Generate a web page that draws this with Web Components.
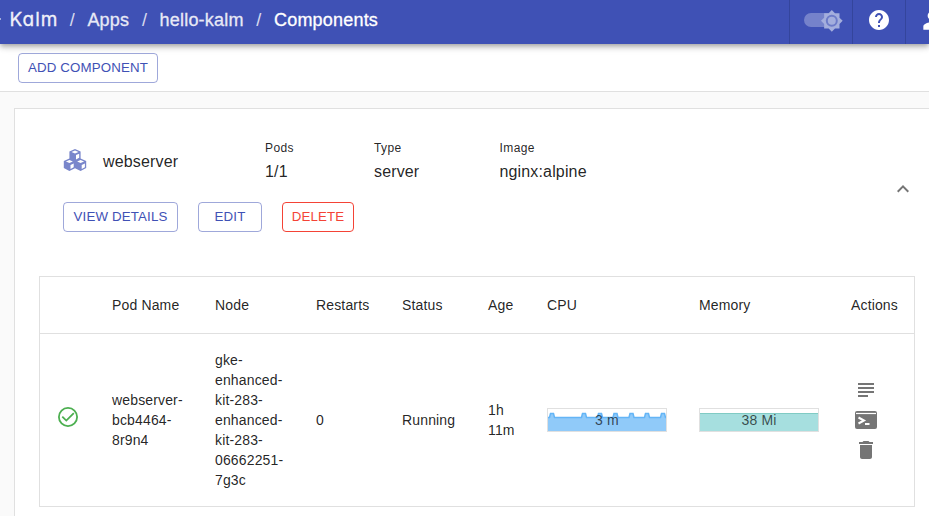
<!DOCTYPE html>
<html lang="en">
<head>
<meta charset="utf-8">
<title>Kalm</title>
<style>
html,body{margin:0;height:100%;overflow:hidden}
body{background:#fafafa;font-family:"Liberation Sans",Arial,sans-serif;color:rgba(0,0,0,.87);font-size:14px;line-height:20px}
</style>
</head>
<body>
<kalm-app></kalm-app>
<script>
const define = (name, html) => {
  const template = document.createElement('template');
  template.innerHTML = html;
  customElements.define(name, class extends HTMLElement {
    constructor() {
      super();
      this.attachShadow({ mode: 'open' }).append(template.content.cloneNode(true));
    }
  });
};

define('outline-button', `
<style>
:host{display:inline-flex;box-sizing:border-box;height:30px;align-items:center;justify-content:center;border:1px solid var(--edge,rgba(63,81,181,.5));border-radius:4px;color:var(--ink,#3f51b5);font-size:13.300px;letter-spacing:.15px;white-space:nowrap;line-height:20px}
</style><slot></slot>`);

define('kalm-header', `
<style>
:host{display:flex;height:44px;background:#3f51b5;color:#fff;position:relative;box-shadow:0 2px 4px -1px rgba(0,0,0,.2),0 4px 5px rgba(0,0,0,.14),0 1px 10px rgba(0,0,0,.12);z-index:1}
nav{display:flex;align-items:center;font-size:18px;letter-spacing:.2px;flex:1;height:40px;-webkit-text-stroke:.3px currentColor;white-space:nowrap}
.arrow{width:2px;height:2px;background:#c5cbe9;border-radius:1px;margin:0 8.500px 2px -1px}
.logo{font-family:Inter,sans-serif;font-feature-settings:"cv11";font-size:19px;width:47.500px;letter-spacing:1px;opacity:.92}
.sep{width:5px;margin:0 12.700px;opacity:.8;-webkit-text-stroke:0}
.dim{opacity:.88}
.tools{display:grid;grid-template-columns:63px 53px 53px;width:140px;overflow:hidden;height:44px}
.cell{border-left:1px solid #34459c;box-sizing:border-box;display:flex;align-items:center;justify-content:center;padding-bottom:4px}
.switch{display:block;margin-left:6px}
</style>
<nav><span class="arrow"></span><span class="logo">Kalm</span><span class="sep">/</span><span class="dim">Apps</span><span class="sep">/</span><span class="dim">hello-kalm</span><span class="sep">/</span><span>Components</span></nav>
<div class="tools">
<div class="cell"><svg class="switch" width="42" height="24" viewBox="0 0 42 24"><rect x="1" y="5" width="34" height="14" rx="7" fill="#7582cb"/><path transform="translate(17.300 1.300) scale(.96)" fill="#a4aedd" d="M20 8.690V4h-4.690L12 .690 8.690 4H4v4.690L.690 12 4 15.310V20h4.690L12 23.310 15.310 20H20v-4.690L23.310 12z"/><circle cx="28.800" cy="12.800" r="5" fill="#a4aedd" stroke="#6d7bc8" stroke-width="2"/></svg></div>
<div class="cell"><svg width="24" height="24" viewBox="0 0 24 24" fill="#fff"><path d="M12 2C6.480 2 2 6.480 2 12s4.480 10 10 10 10-4.480 10-10S17.520 2 12 2zm1 17h-2v-2h2v2zm2.070-7.750l-.900.920C13.450 12.900 13 13.500 13 15h-2v-.500c0-1.100.450-2.100 1.170-2.830l1.240-1.260c.370-.360.590-.860.590-1.410 0-1.100-.900-2-2-2s-2 .900-2 2H8c0-2.210 1.790-4 4-4s4 1.790 4 4c0 .880-.360 1.680-.930 2.250z"/></svg></div>
<div class="cell"><svg width="28" height="26" viewBox="0 0 24 24" fill="#fff"><path d="M12 12c2.210 0 4-1.790 4-4s-1.790-4-4-4-4 1.790-4 4 1.790 4 4 4zm0 2c-2.670 0-8 1.340-8 4v3h16v-3c0-2.660-5.330-4-8-4z"/></svg></div>
</div>`);

define('info-field', `
<style>
:host{display:block}
.label{font-size:12px;line-height:20px;letter-spacing:.4px}
.value{font-size:16px;line-height:24px;letter-spacing:.15px;margin-top:2px}
</style><div class="label"><slot name="label"></slot></div><div class="value"><slot></slot></div>`);

define('component-summary', `
<style>
:host{display:grid;grid-template-columns:1fr 24px;height:167px;padding-left:48px;box-sizing:border-box}
.info{display:grid;grid-template-columns:40px 162px 109px 125.500px 1fr;padding-top:29px;height:64px;align-items:start}
.cubes{margin-top:10px;display:block}
.name{font-size:16px;line-height:24px;letter-spacing:.15px;margin-top:12px}
.buttons{display:flex;gap:20px}
.chevron{margin-top:68px;margin-left:-14px}
</style>
<div>
<div class="info">
<svg class="cubes" width="24" height="24" viewBox="0 0 24 24"><path fill="#7986cb" d="M12 1l5.600 2.400v7.100L23.200 13v7.100L17.600 23 12 20.300 6.400 23 .8 20.100V13l5.600-2.500V3.400z"/>
<path fill="#fff" d="M8.500 3.900l3.500-1.400 3.500 1.400L12 5.400zM13 7.100l3.200-1.400v4.100L13 11.400zM2.900 13.500l3.500-1.400 3.500 1.400L6.400 15zM7.500 16.900l3.200-1.400v3.700l-3.200 1.700zM14.100 13.500l3.500-1.400 3.500 1.400-3.500 1.500zM18.700 16.900l3.200-1.400v3.700l-3.200 1.700z"/></svg>
<div class="name">webserver</div>
<info-field><span slot="label">Pods</span>1/1</info-field>
<info-field><span slot="label">Type</span>server</info-field>
<info-field><span slot="label">Image</span>nginx:alpine</info-field>
</div>
<div class="buttons"><outline-button style="width:115px">VIEW DETAILS</outline-button><outline-button style="width:64px">EDIT</outline-button><outline-button style="width:72px;--ink:#f44336;--edge:#f44336">DELETE</outline-button></div>
</div>
<svg class="chevron" width="24" height="24" viewBox="0 0 24 24" fill="#757575"><path d="M12 8l-6 6 1.410 1.410L12 10.830l4.590 4.580L18 14z"/></svg>`);

class ChartPlot extends HTMLElement {
  connectedCallback() {
    const bumps = (this.getAttribute('bumps') || '').split(' ').filter(Boolean).map(Number);
    const y = +this.getAttribute('level');
    let d = 'M1 ' + y;
    for (const x of bumps) d += 'H' + (x - 2.500) + 'L' + (x - 1.500) + ' ' + (y - 4) + 'H' + (x + 1.500) + 'L' + (x + 2.500) + ' ' + y;
    d += 'H119';
    this.attachShadow({ mode: 'open' }).innerHTML = `
<style>:host{display:grid;width:120px;height:24px;place-items:center}svg,span{grid-area:1/1}svg{display:block}span{color:rgba(0,0,0,.68);letter-spacing:.15px}</style>
<svg width="120" height="24"><rect width="120" height="24" fill="#fff"/><path d="${d}V23H1Z" fill="${this.getAttribute('fill')}"/><path d="${d}" fill="none" stroke="${this.getAttribute('line')}" stroke-width="${this.getAttribute('weight')}"/><rect x=".5" y=".5" width="119" height="23" fill="none" stroke="#e0e0e0"/></svg><span><slot></slot></span>`;
  }
}
customElements.define('chart-plot', ChartPlot);

define('pod-table', `
<style>
:host{display:block;box-sizing:border-box;width:876px;height:231px;margin-left:24px;border:1px solid #e0e0e0;letter-spacing:.15px}
.row{display:grid;grid-template-columns:72px 103px 101px 86px 86px 59px 152px 152px 63px;align-items:center}
.head{height:56px;border-bottom:1px solid #e0e0e0}
.body{height:172px}
.check{margin-left:16px;margin-top:-6px;display:block}
.actions{display:grid;gap:6px;margin-left:3px}
.actions svg{display:block}
</style>
<div class="row head"><span></span><span>Pod Name</span><span>Node</span><span>Restarts</span><span>Status</span><span>Age</span><span>CPU</span><span>Memory</span><span>Actions</span></div>
<div class="row body">
<svg class="check" width="24" height="24" viewBox="0 0 24 24" fill="none" stroke="#4caf50" stroke-width="1.800"><circle cx="12" cy="12" r="9.100"/><path d="M6.300 11.600l4 4 7.500-7.500"/></svg>
<span>webserver-<br>bcb4464-<br>8r9n4</span><span>gke-<br>enhanced-<br>kit-283-<br>enhanced-<br>kit-283-<br>06662251-<br>7g3c</span><span>0</span><span>Running</span><span>1h<br>11m</span>
<chart-plot level="9.5" bumps="5 37 53 68.5 84.500 100 116" fill="#90caf9" line="#64b5f6" weight="1.5">3 m</chart-plot>
<chart-plot level="5.5" fill="#a6dfdf" line="#80cbc4" weight="1">38 Mi</chart-plot>
<div class="actions">
<svg width="24" height="24" viewBox="0 0 24 24" fill="#757575"><path d="M4 5h16v2H4zM4 9h16v2H4zM4 13h16v2H4zM4 17h10v2H4z"/></svg>
<svg width="24" height="24" viewBox="0 0 24 24"><rect x="1" y="3" width="22" height="18" rx="2" fill="#757575"/><path d="M2 5.500h20" stroke="#fff" stroke-width="1.200"/><path d="M4.500 9.500l5.500 3-5.500 3M11 16h4.500" fill="none" stroke="#fff" stroke-width="2"/></svg>
<svg width="24" height="24" viewBox="0 0 24 24" fill="#757575"><path d="M6 19c0 1.100.900 2 2 2h8c1.100 0 2-.900 2-2V7H6v12zM19 4h-3.500l-1-1h-5l-1 1H5v2h14V4z"/></svg>
</div></div>`);

define('kalm-app', `
<style>
:host{display:flex;flex-direction:column;height:100%;overflow:hidden}
.bar{flex:none;background:#fff;border-bottom:1px solid #e0e0e0;padding:9px 0 0 18px;height:38px}
.panel{margin:16px 0 0 14px;background:#fff;border:1px solid #e0e0e0;border-width:1px 0 0 1px;flex:1;min-height:0;overflow:hidden}
kalm-header{flex:none}
</style>
<kalm-header></kalm-header>
<div class="bar"><outline-button style="width:140px">ADD COMPONENT</outline-button></div>
<div class="panel"><component-summary></component-summary><pod-table></pod-table></div>`);
</script>
</body>
</html>
